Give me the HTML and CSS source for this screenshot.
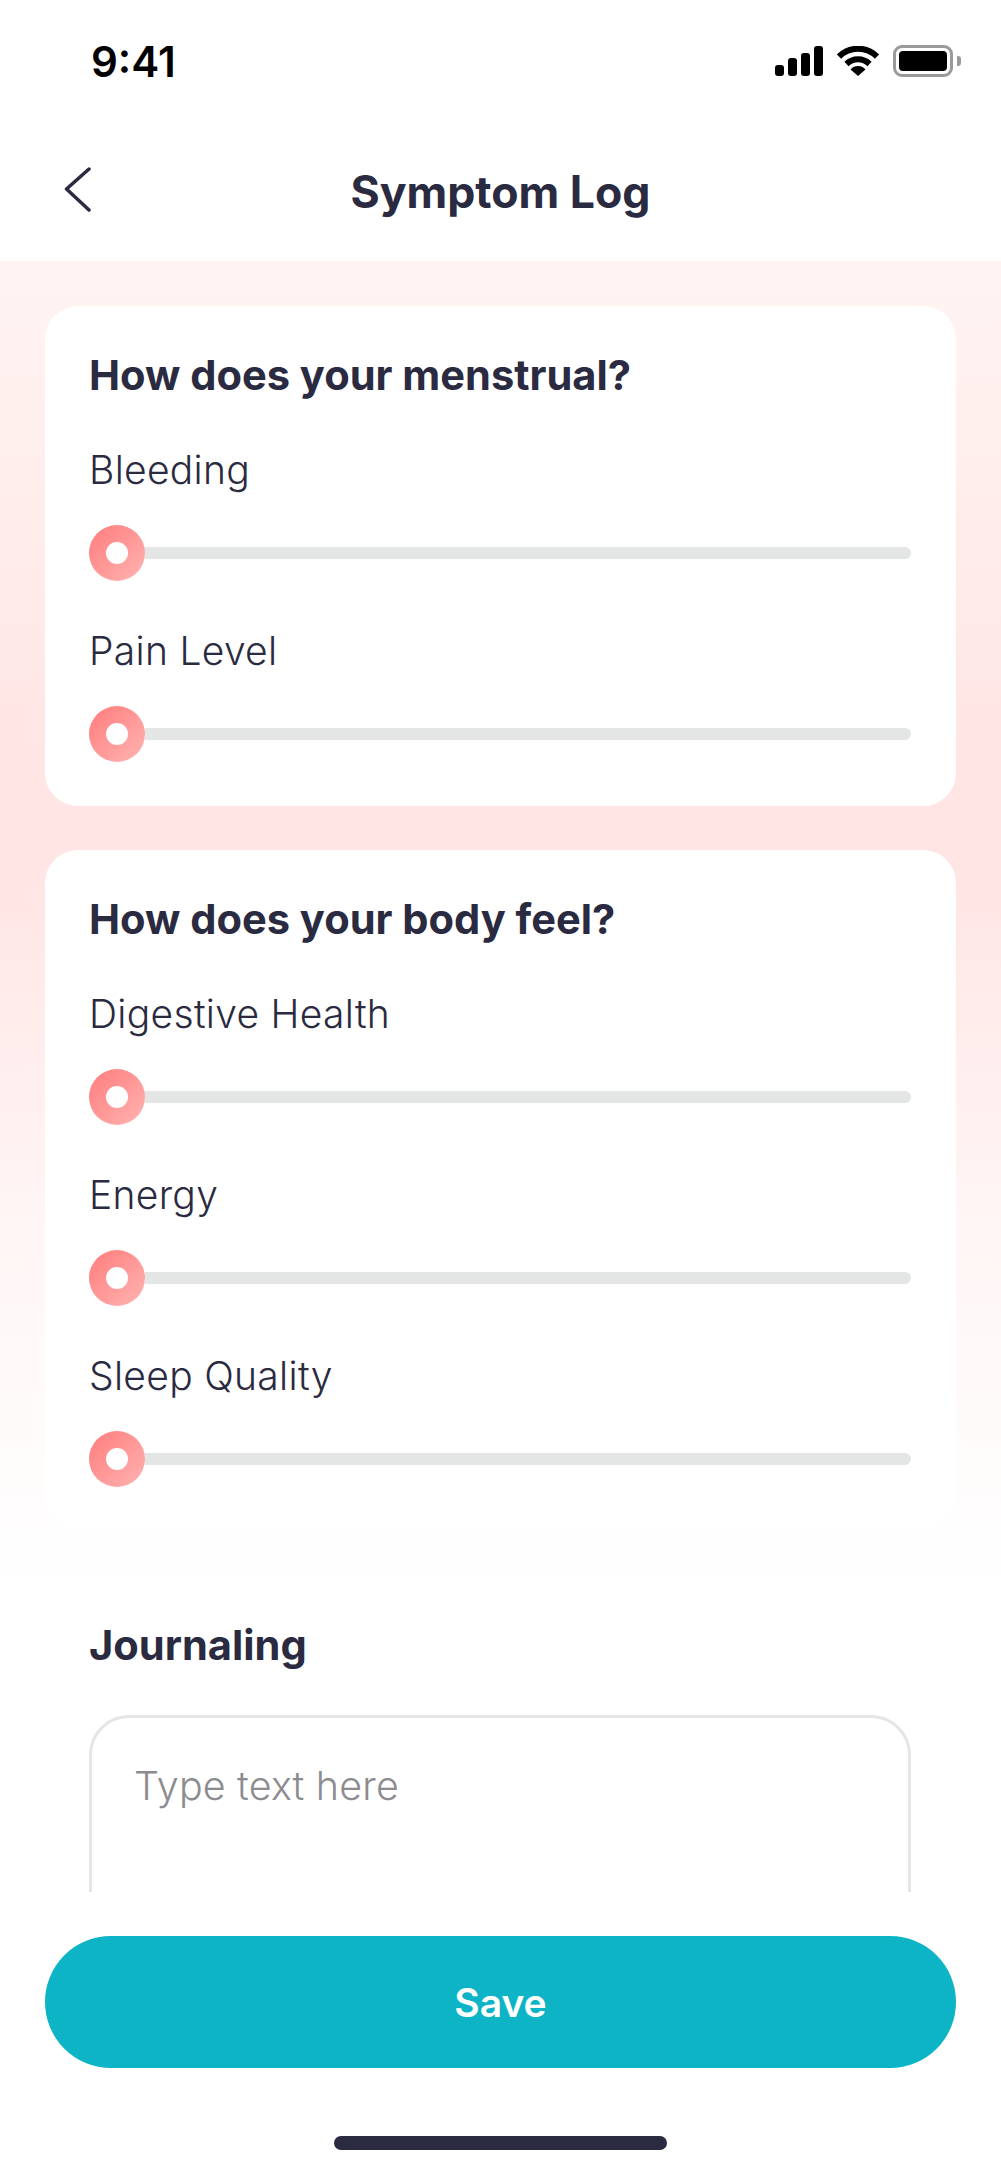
FILE: index.html
```html
<!DOCTYPE html>
<html lang="en">
<head>
  <meta charset="UTF-8" />
  <title>Symptom Log</title>
  <meta name="viewport" content="width=device-width, initial-scale=1.0"/>
  <link rel="stylesheet" href="styles.css">
</head>
<body>

  <div class="status-bar">
    <span class="clock">9:41</span>
    <div class="status-icons">
      <svg width="48" height="30" viewBox="0 0 48 30">
        <rect x="0" y="19" width="9" height="11" rx="3" />
        <rect x="13" y="12" width="9" height="18" rx="3" />
        <rect x="26" y="7" width="9" height="23" rx="3" />
        <rect x="39" y="0" width="9" height="30" rx="3" />
      </svg>
      <svg width="42" height="30" viewBox="0 0 42 30">
        <path d="M2 10.5 A27 27 0 0 1 40 10.5" fill="none" stroke="#000" stroke-width="6" />
        <path d="M9.5 18 A16.5 16.5 0 0 1 32.5 18" fill="none" stroke="#000" stroke-width="6" />
        <path d="M13.5 23.5 A10 10 0 0 1 28.500 23.500 L21 30 Z" />
      </svg>
      <div class="battery">
        <div class="battery-body"><div class="battery-fill"></div></div>
        <div class="battery-nub"></div>
      </div>
    </div>
  </div>

  <header class="top-bar">
    <svg class="back" width="27" height="45" viewBox="0 0 27 45">
      <path d="M25 2 L2.500 22 L25 43" fill="none" stroke="#2a2a40" stroke-width="3.500" stroke-linecap="round" stroke-linejoin="round" />
    </svg>
    <h1>Symptom Log</h1>
  </header>

  <main class="content">
    <section class="card">
      <h2>How does your menstrual?</h2>
      <div class="field">
        <label>Bleeding</label>
        <div class="slider"><span class="thumb"></span><span class="track"></span></div>
      </div>
      <div class="field">
        <label>Pain Level</label>
        <div class="slider"><span class="thumb"></span><span class="track"></span></div>
      </div>
    </section>

    <section class="card tall">
      <h2>How does your body feel?</h2>
      <div class="field">
        <label>Digestive Health</label>
        <div class="slider"><span class="thumb"></span><span class="track"></span></div>
      </div>
      <div class="field">
        <label>Energy</label>
        <div class="slider"><span class="thumb"></span><span class="track"></span></div>
      </div>
      <div class="field">
        <label>Sleep Quality</label>
        <div class="slider"><span class="thumb"></span><span class="track"></span></div>
      </div>
    </section>

    <section class="journal">
      <h2>Journaling</h2>
      <div class="text-box">Type text here</div>
    </section>
  </main>

  <footer class="bottom">
    <button class="save">Save</button>
    <div class="home-bar"></div>
  </footer>

</body>
</html>
```

FILE: styles.css
```css
* {
  box-sizing: border-box;
}
html, body {
  margin: 0;
  padding: 0;
}
body {
  width: 1001px;
  height: 2167px;
  overflow: hidden;
  background: #fff;
  font-family: Inter, "Liberation Sans", sans-serif;
  color: #2a2a40;
}

.status-bar {
  height: 110px;
  padding: 0 40px 0 91px;
  display: flex;
  justify-content: space-between;
  align-items: flex-start;
}
.clock {
  margin-top: 38px;
  font-size: 42px;
  line-height: 48px;
  font-weight: 600;
  color: #000;
}
.status-icons {
  margin-top: 45px;
  display: flex;
  align-items: center;
  gap: 14px;
}
.battery {
  display: flex;
  align-items: center;
  gap: 4px;
}
.battery-body {
  width: 60px;
  height: 32px;
  border: 3px solid #9a9a9a;
  border-radius: 9px;
  padding: 3px;
}
.battery-fill {
  height: 100%;
  background: #000;
  border-radius: 4px;
}
.battery-nub {
  width: 4px;
  height: 10px;
  background: #9a9a9a;
  border-radius: 0 3px 3px 0;
}

.top-bar {
  height: 151px;
  padding: 57px 0 0 64px;
  position: relative;
}
.top-bar .back {
  display: block;
}
.top-bar h1 {
  position: absolute;
  left: 0;
  right: 0;
  top: 54px;
  margin: 0;
  text-align: center;
  font-size: 44.6px;
  line-height: 56px;
  font-weight: 700;
}

.content {
  height: 1631px;
  overflow: hidden;
  padding: 45px 45px 0;
  background: linear-gradient(180deg, #fff4f2 0, #ffe5e4 530px, #ffe5e4 600px, #fff5f4 940px, #ffffff 1320px);
}
.card {
  background: #fff;
  border-radius: 33px;
  padding: 45px 45px 0 44px;
  margin-bottom: 44px;
  height: 500px;
}
.card.tall {
  height: 680px;
}
.card h2, .journal h2 {
  margin: 0;
  font-size: 41.6px;
  line-height: 48px;
  font-weight: 700;
}
.field {
  margin-top: 44px;
}
.card h2 + .field {
  margin-top: 45px;
}
.field label {
  display: block;
  font-size: 39px;
  line-height: 52px;
  font-weight: 350;
  letter-spacing: 0.3px;
}
.slider {
  margin-top: 29px;
  height: 56px;
  display: flex;
  align-items: center;
}
.track {
  flex: 1;
  height: 12px;
  background: #e4e6e5;
  border-radius: 0 6px 6px 0;
}
.thumb {
  width: 56px;
  height: 56px;
  border-radius: 50%;
  background: linear-gradient(135deg, #ff7c7c, #ffb4b2);
  position: relative;
  flex: none;
}
.thumb::after {
  content: "";
  position: absolute;
  left: 17px;
  top: 17px;
  width: 22px;
  height: 22px;
  border-radius: 50%;
  background: #fff;
}

.journal {
  padding: 47px 45px 0 44px;
}
.text-box {
  margin-top: 46px;
  height: 300px;
  border: 3px solid #e5e5e5;
  border-radius: 40px;
  padding: 42px 42px;
  font-size: 39.4px;
  line-height: 52px;
  font-weight: 350;
  letter-spacing: 0.2px;
  color: #8c8c8f;
}

.bottom {
  height: 275px;
  padding: 44px 45px 0;
  background: #fff;
}
.save {
  display: block;
  width: 100%;
  height: 132px;
  border: none;
  border-radius: 66px;
  background: #0cb4c6;
  color: #fff;
  font-family: inherit;
  font-size: 39px;
  font-weight: 600;
}
.home-bar {
  width: 333px;
  height: 14px;
  margin: 68px auto 0;
  border-radius: 7px;
  background: #2a2a40;
}
```
